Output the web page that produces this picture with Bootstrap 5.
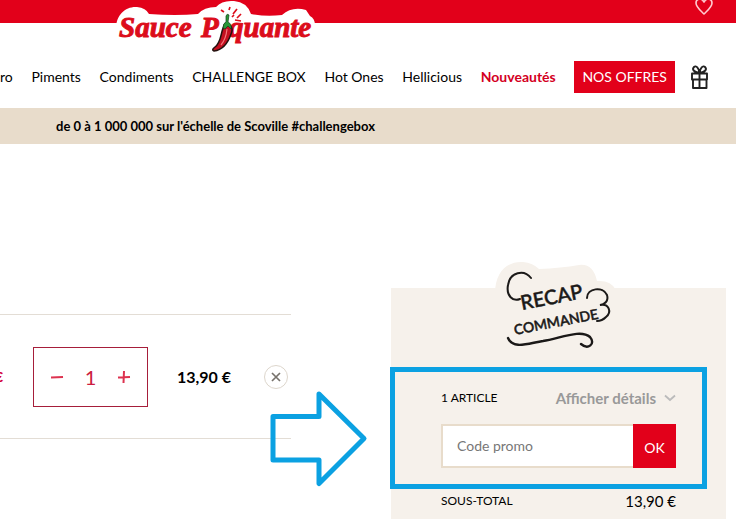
<!DOCTYPE html>
<html lang="fr">
<head>
<meta charset="utf-8">
<meta name="viewport" content="width=device-width, initial-scale=1">
<title>Panier - Sauce Piquante</title>
<link href="https://cdn.jsdelivr.net/npm/bootstrap@5.3.0/dist/css/bootstrap.min.css" rel="stylesheet">
<style>
  :root { --rouge: #e2001a; --creme: #f6f1eb; --sable: #e8dccb; --bleu: #0ba1e2; }
  body { font-family: "Lato", sans-serif; font-size: 14px; line-height: 24px; color: #000; background: #fff; }
  a { color: inherit; text-decoration: none; }
  .topbar { height: 23px; background: var(--rouge); padding-right: 22px; }
  .brand { position: absolute; left: 110px; top: 0; }
  .mainnav { height: 85px; padding: 22px 27px 0 0; }
  .mainnav ul { gap: 8px; padding-right: 15px; }
  .hot { color: #d4001f; }
  .offers { background: var(--rouge); color: #fff; height: 32px; padding: 4px 8px; }
  .promo-strip { background: var(--sable); height: 36px; padding-left: 56px; font-size: 13px; line-height: 36px; }
  .cart { padding-right: 10px; gap: 100px; }
  .lines { margin-top: 170px; }
  .line-item { border: solid #e3ddd5; border-width: 1px 0; height: 125px; padding-right: 3px; }
  .unit { width: 33px; color: #d4003a; direction: rtl; }
  .unit span { padding-right: 30px; }
  .qty { width: 115px; height: 60px; border: 1px solid #a61e3a; padding: 0 14px; color: #dd3350; }
  .qty button { border: 0; background: none; padding: 0; width: 18px; line-height: 0; color: inherit; }
  .qty input { width: 30px; border: 0; background: none; padding: 0; text-align: center; font-size: 20px; color: #cc1c40; }
  .price { font-size: 16px; margin-left: 29px; }
  .remove { width: 24px; height: 24px; border: 1px solid #ddd6cc; background: #fff; padding: 0; line-height: 0; }
  .summary { width: 335px; margin-top: 144px; padding: 0 50px; background: var(--creme); }
  .summary-title { margin: -28px 0 0 54px; line-height: 0; }
  .count-row { margin-top: 32px; }
  .caps { font-size: 12px; }
  .details { border: 0; background: none; padding: 0; color: #999; font-size: 15px; }
  .code-form { margin-top: 14px; height: 44px; }
  .code-form input { border: 2px solid var(--sable); border-right: 0; padding: 0 14px; min-width: 0; background: #fff; }
  .code-form input::placeholder { color: #777; opacity: 1; }
  .code-form button { width: 43px; border: 0; background: var(--rouge); color: #fff; padding: 4px 0 0; }
  .subtotal { margin-top: 21px; }
  .total { font-size: 15px; }
  .highlight { left: -1px; top: 79px; width: 317px; height: 122px; border: 5px solid var(--bleu); pointer-events: none; }
  .pointer { left: -121px; top: 102px; pointer-events: none; }
</style>
</head>
<body>
<div class="d-flex flex-column min-vh-100 overflow-hidden">
  <header class="position-relative">
    <div class="topbar d-flex justify-content-end">
      <a href="#" aria-label="Favoris" class="lh-1"><svg class="d-block" width="20" height="16" viewBox="0 0 20 16" fill="none" stroke="#ffc9cf" stroke-width="1.6" stroke-linejoin="round"><path d="M10 14C6 10 2 7 2 3C2-1 7-3 10 2C13-3 18-1 18 3C18 7 14 10 10 14Z"/></svg></a>
    </div>
    <a class="brand" href="#" aria-label="Sauce Piquante">
      <svg class="d-block" width="212" height="56" viewBox="0 0 212 56">
        <path fill="#fff" d="M7 34C3 18 14 6 27 7Q36 8 39 14Q66 16 88 14Q94 7 106 7Q112 0 124 1Q137 2 141 14Q156 17 172 15Q182 6 196 10L200 16Q207 20 204 30L198 42H8Z"/>
        <g font-family="'Liberation Serif', serif" font-style="italic" font-weight="700" font-size="29" fill="#dc0d1b" stroke="#dc0d1b" stroke-width="1">
          <text x="9" y="37">Sauce</text><text x="91" y="37">P</text><text x="119" y="37">quante</text>
        </g>
        <path d="M115 24C120 23 124 28 121 34C118 43 112 50 104 51Q101 50 105 47C112 42 110 32 115 24Z" fill="#c51020" stroke="#24110e" stroke-width="1.5"/>
        <path d="M117 29Q116 39 111 45" fill="none" stroke="#f4787b" stroke-width="1.2"/>
        <path d="M113 28Q113 23 116 22L116 16Q117 13 119 15L118 22Q122 24 121 29L118 26L115 29Z" fill="#279837" stroke="#163e1a" stroke-width=".7"/>
        <path d="M114 12L111 10M119 10L120 7M123 14L127 9M127 18L131 14M125 20L131 21M122 17L124 15" stroke="#dc0d1b" stroke-width="1.7"/>
      </svg>
    </a>
    <nav class="mainnav d-flex align-items-center" aria-label="Navigation principale">
      <ul class="list-unstyled d-flex flex-grow-1 justify-content-between align-items-center text-nowrap mb-0">
        <li><a href="#">ro</a></li>
        <li><a href="#">Piments</a></li>
        <li><a href="#">Condiments</a></li>
        <li><a href="#">CHALLENGE BOX</a></li>
        <li><a href="#">Hot Ones</a></li>
        <li><a href="#">Hellicious</a></li>
        <li><a href="#" class="hot fw-bold">Nouveautés</a></li>
        <li><a href="#" class="offers d-block">NOS OFFRES</a></li>
      </ul>
      <a href="#" aria-label="Cadeaux"><svg class="d-block" width="19" height="26" viewBox="0 0 19 26" fill="none" stroke="#222" stroke-width="1.9" stroke-linejoin="round"><path d="M2 9.500H17V15.500H2ZM3 15.500V24H16.500V15.500M9.500 9V24M9.500 9C3 8 2 5 4 3C6 1 9 4 9.500 9C10 4 13 1 15 3C17 5 16 8 9.500 9Z"/></svg></a>
    </nav>
    <div class="promo-strip fw-bold text-nowrap">de 0 à 1 000 000 sur l'échelle de Scoville #challengebox</div>
  </header>

  <main class="cart d-flex flex-grow-1">
    <section class="lines flex-grow-1" aria-label="Articles">
      <div class="line-item d-flex align-items-center">
        <div class="unit fw-bold"><span>€</span></div>
        <div class="qty d-flex align-items-center justify-content-between">
          <button type="button" aria-label="Diminuer"><svg width="14" height="14" viewBox="0 0 14 14" stroke="currentColor" stroke-width="2"><path d="M1 7.500L13 7"/></svg></button>
          <input type="text" value="1" aria-label="Quantité">
          <button type="button" aria-label="Augmenter"><svg width="14" height="14" viewBox="0 0 14 14" stroke="currentColor" stroke-width="2"><path d="M1 7.500L13 7M7 1L6.500 13"/></svg></button>
        </div>
        <div class="price fw-bold text-nowrap">13,90 €</div>
        <button type="button" class="remove rounded-circle ms-auto" aria-label="Supprimer"><svg width="10" height="10" viewBox="0 0 10 10" stroke="#77726c" stroke-width="1.7"><path d="M1 1L9 9M9 1L1 9"/></svg></button>
      </div>
    </section>

    <aside class="summary position-relative flex-shrink-0">
      <h2 class="summary-title mb-0">
        <svg width="122" height="94" viewBox="0 0 122 94" role="img" aria-label="Recap commande">
          <path fill="#f6f1eb" d="M0 34C0 10 14 1 28 2Q38 3 44 9Q66 8 84 5Q98 3 102 21Q116 20 121 30V94H0Z"/>
          <g font-family="'Lato', sans-serif" fill="#1b1918" stroke="#1b1918" stroke-width=".5">
            <text x="27" y="50" font-size="20" transform="rotate(-11 27 50)">RECAP</text>
            <text x="20" y="75" font-size="14" transform="rotate(-11 20 75)">COMMANDE</text>
          </g>
          <g fill="none" stroke="#1b1918" stroke-width="2" stroke-linecap="round">
            <path d="M36 18C29 9 15 12 13 25C11 36 18 42 25 39"/>
            <path d="M92 38C92 28 108 26 112 35C114 41 109 45 105 45C114 43 117 52 111 57Q107 61 102 61"/>
            <path stroke-width="2.400" d="M13 78C18 90 34 83 48 81C66 78 86 69 95 77C101 84 93 90 86 84"/>
          </g>
        </svg>
      </h2>
      <div class="count-row d-flex justify-content-between align-items-center">
        <span class="caps">1 ARTICLE</span>
        <button type="button" class="details fw-bold d-flex align-items-center gap-2">Afficher détails <svg width="12" height="8" viewBox="0 0 12 8" fill="none" stroke="#bbb" stroke-width="1.8"><path d="M1 1.500L6 6L11 1.500"/></svg></button>
      </div>
      <form class="code-form d-flex">
        <input class="flex-grow-1" type="text" placeholder="Code promo" aria-label="Code promo">
        <button class="flex-shrink-0" type="submit">OK</button>
      </form>
      <div class="subtotal d-flex justify-content-between">
        <span class="caps">SOUS-TOTAL</span><span class="total">13,90 €</span>
      </div>
      <div class="highlight position-absolute"></div>
      <svg class="pointer position-absolute" width="98" height="98" viewBox="0 0 98 98" fill="none" stroke="#0ba1e2" stroke-width="5" stroke-linejoin="round"><path d="M3 26.500H49V4L94 48.500L49 93.500V70H3Z"/></svg>
    </aside>
  </main>
</div>
<script src="https://cdn.jsdelivr.net/npm/bootstrap@5.3.0/dist/js/bootstrap.bundle.min.js"></script>
</body>
</html>
